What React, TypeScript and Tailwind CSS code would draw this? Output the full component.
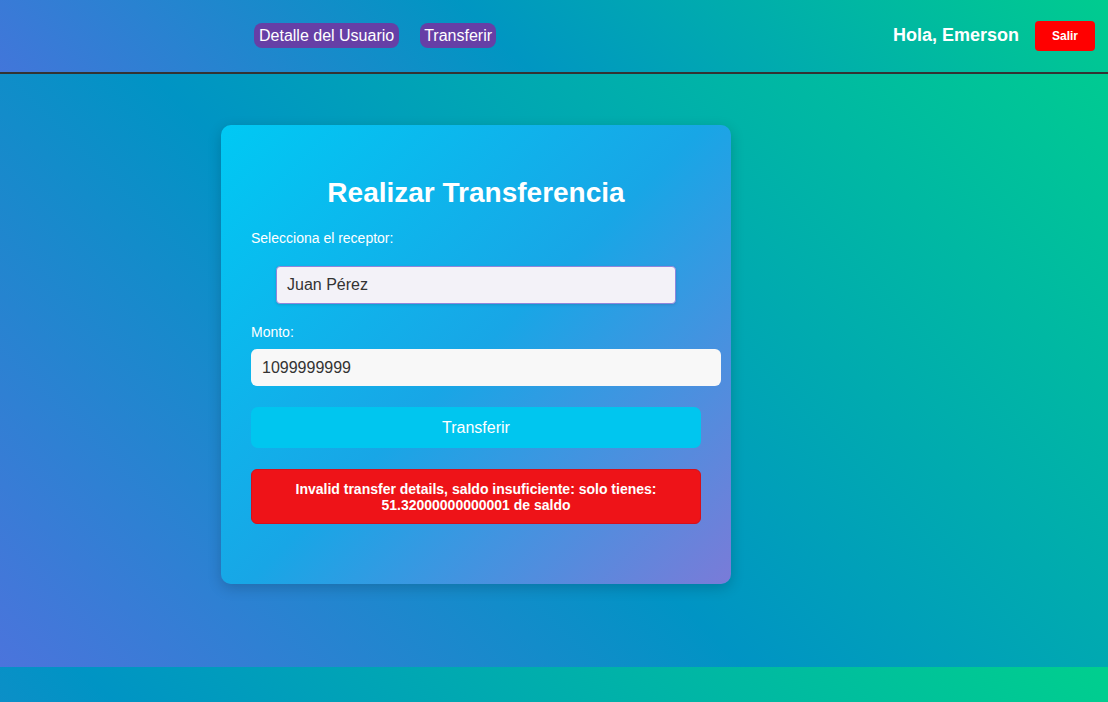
import React from "react";

export default function App() {
  return (
    <div
      className="min-h-screen w-full bg-[linear-gradient(45deg,#4b74dc,#0094c4_42%,#00cf8e)] bg-[length:100%_667px] bg-repeat text-white"
      style={{ fontFamily: '"Liberation Sans", Arial, sans-serif' }}
    >
      <header className="h-[74px] border-b-2 border-[#333333] bg-[linear-gradient(45deg,#4276da,#0096c2_45%,#00cc8f)] flex items-center justify-between pl-[254px] pr-[13px]">
        <nav className="flex items-center gap-[21px] mb-[1px]">
          <a className="h-[25px] px-[5px] rounded-[8px] bg-[#663fa6] text-[16px] leading-[25px] text-white">
            Detalle del Usuario
          </a>
          <a className="h-[25px] px-[4px] rounded-[8px] bg-[#663fa6] text-[16px] leading-[25px] text-white">
            Transferir
          </a>
        </nav>
        <div className="flex items-center gap-[16px] mb-[1px]">
          <span className="text-[18px] font-bold">Hola, Emerson</span>
          <button className="h-[30px] w-[60px] rounded-[4px] bg-[#ff0000] text-[12px] font-bold text-white">
            Salir
          </button>
        </div>
      </header>

      <main className="h-[593px] pt-[51px] pl-[221px]">
        <div className="w-[510px] rounded-[10px] bg-[linear-gradient(135deg,#00c9f4,#18a6e6_50%,#7a7bd8)] px-[30px] pt-[30px] pb-[60px] shadow-[0_4px_14px_rgba(0,0,0,0.18)]">
          <h2 className="mt-[22px] text-center text-[28px] leading-[32px] font-bold">
            Realizar Transferencia
          </h2>
          <div className="mt-[21px] text-[14px] leading-[16px]">Selecciona el receptor:</div>
          <div className="mx-auto mt-[20px] h-[38px] w-[400px] rounded-[4px] border border-[#8f86dc] bg-[#f3f2f8] px-[10px] flex items-center text-[16px] text-[#333333] shadow-[0_1px_3px_rgba(0,0,0,0.12)]">
            Juan Pérez
          </div>
          <div className="mt-[20px] text-[14px] leading-[16px]">Monto:</div>
          <div className="mt-[9px] h-[37px] w-[470px] rounded-[6px] bg-[#f8f8f8] px-[11px] flex items-center text-[16px] text-[#333333]">
            1099999999
          </div>
          <button className="mt-[21px] h-[41px] w-full rounded-[7px] bg-[#00c6ef] text-[16px] text-white">
            Transferir
          </button>
          <div className="mt-[21px] rounded-[6px] border border-[#d4101c] bg-[#ee1318] px-[10px] pt-[11px] pb-[10px] text-center text-[14px] leading-[16px] font-bold text-white">
            Invalid transfer details, saldo insuficiente: solo tienes: 51.32000000000001 de saldo
          </div>
        </div>
      </main>
    </div>
  );
}
